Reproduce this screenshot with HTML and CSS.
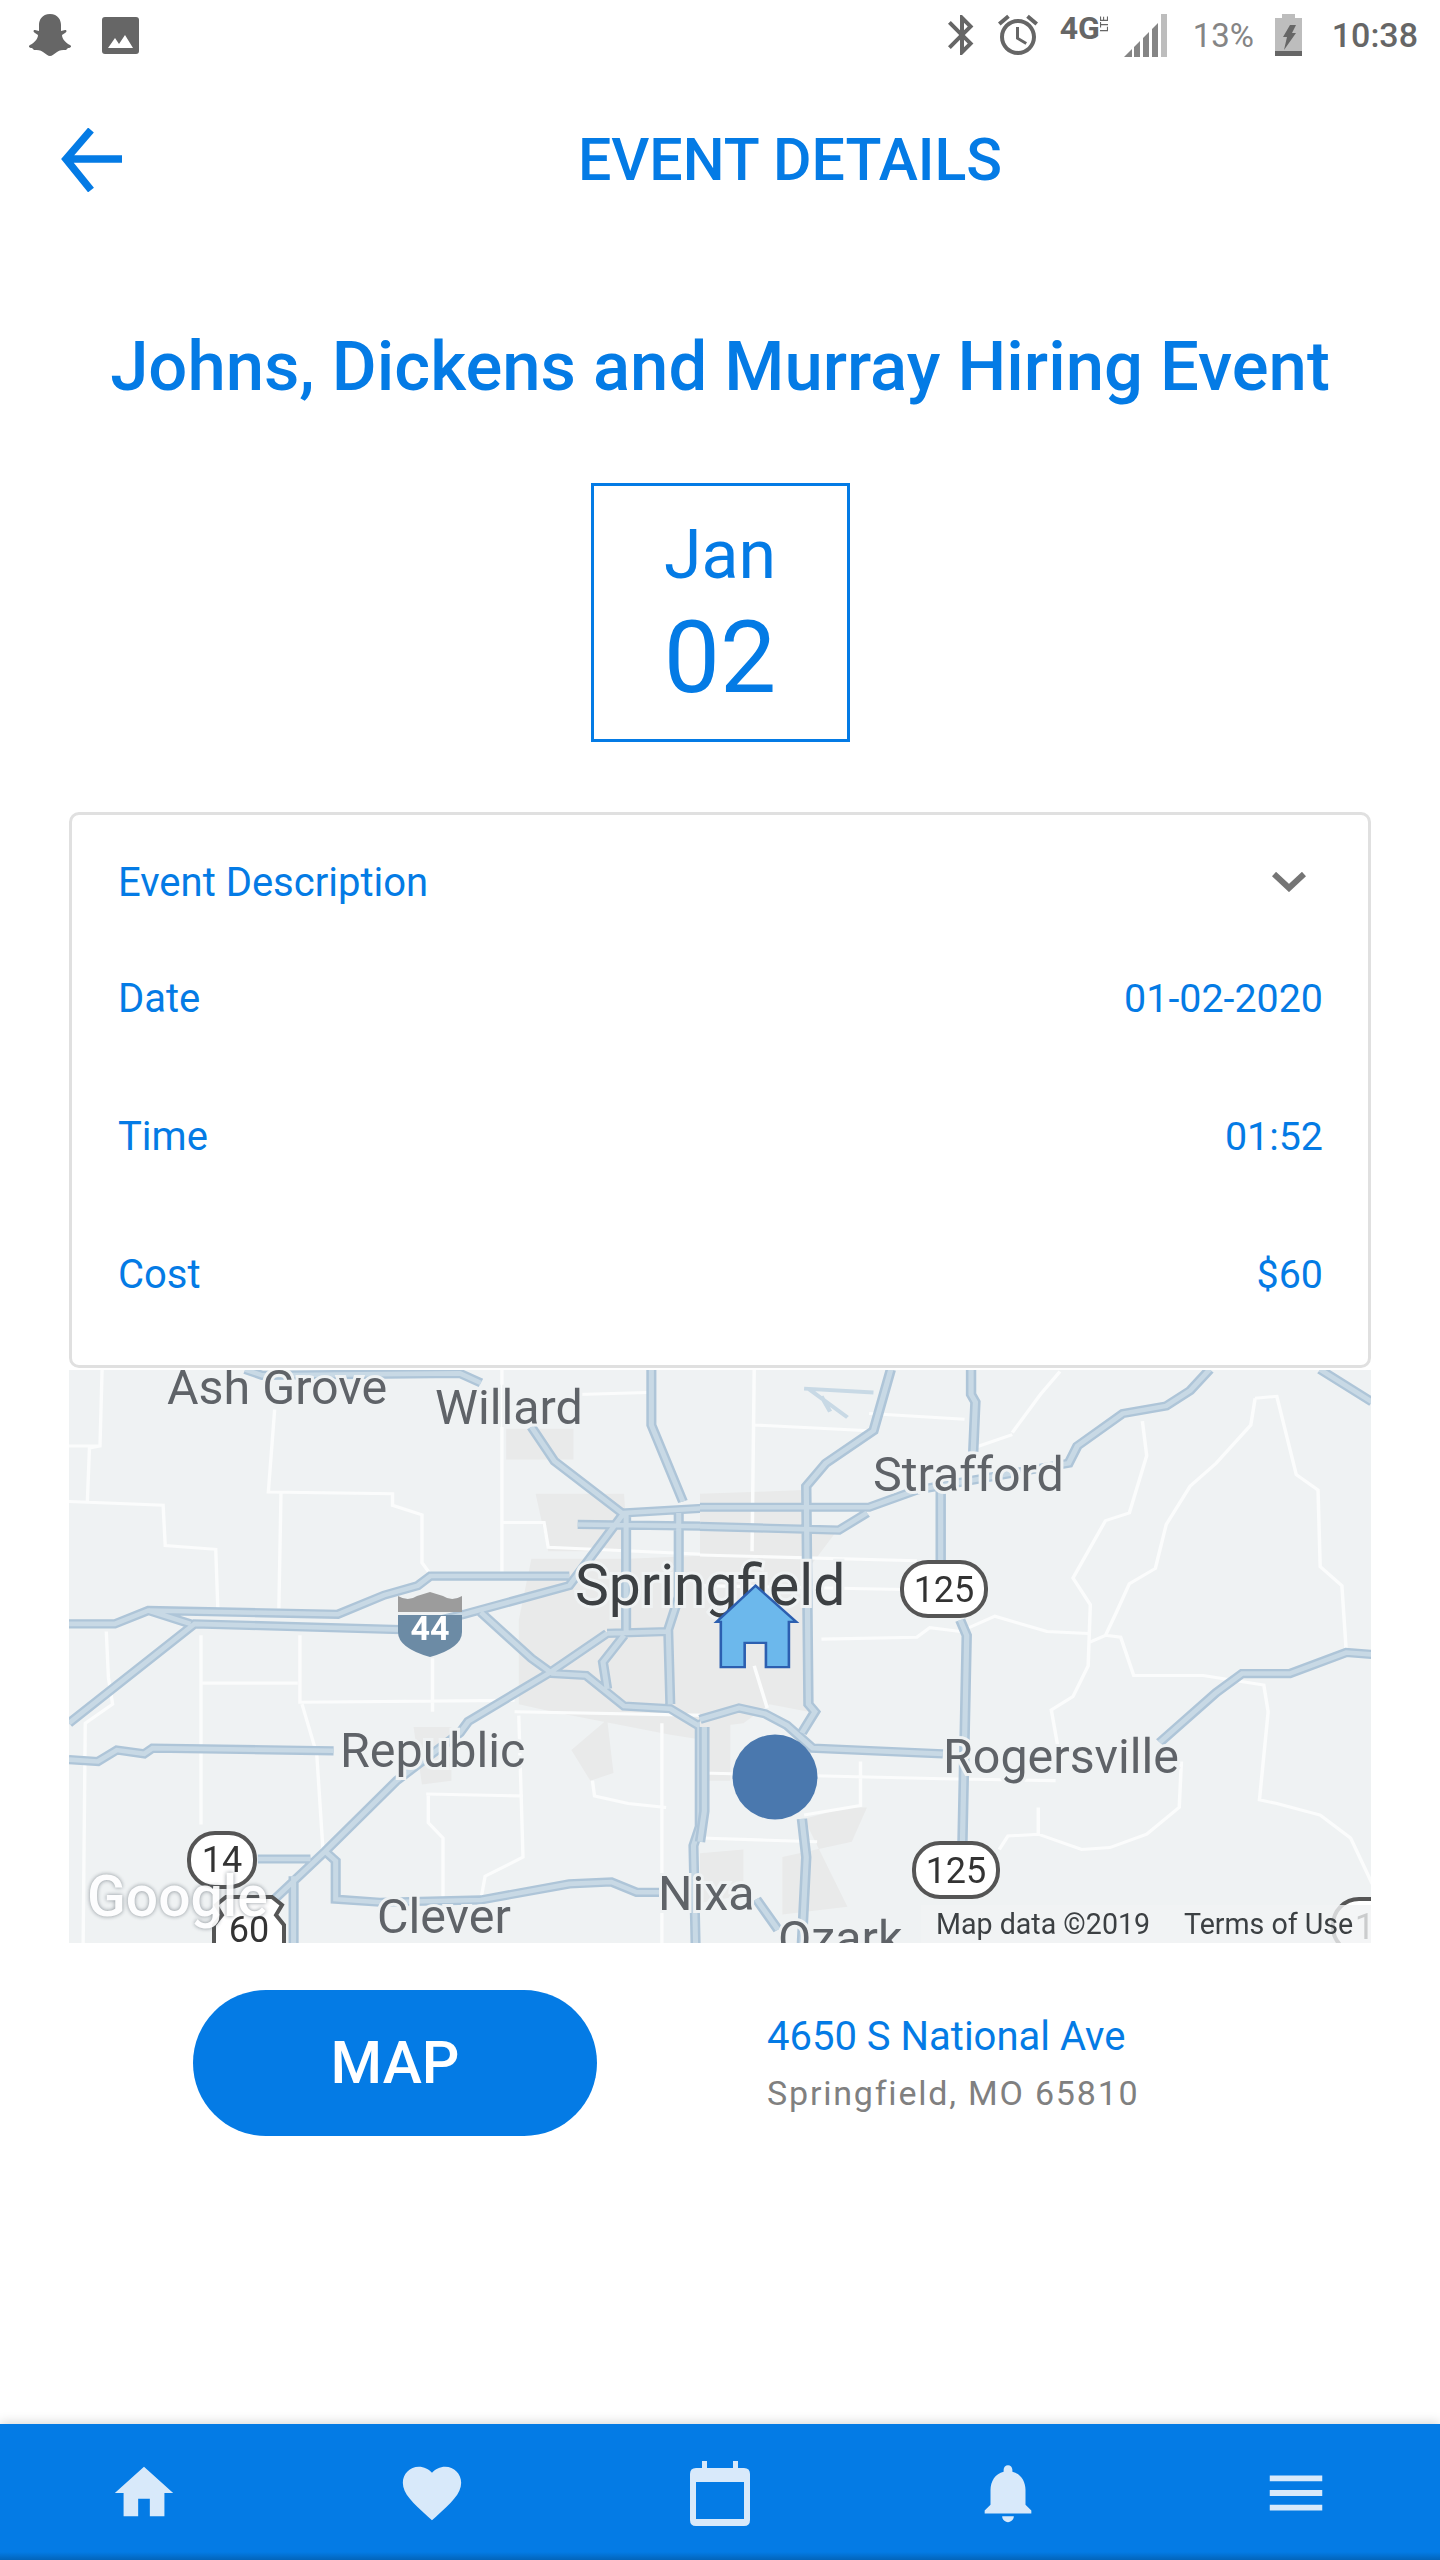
FILE: index.html
```html
<!DOCTYPE html>
<html lang="en">
<head>
    <meta charset="UTF-8">
    <title>Event Details</title>
    <link rel="stylesheet" href="styles.css">
</head>
<body>
<div class="status">
    <svg class="st-snap" viewBox="0 0 45 44"><path d="M22 1C30 1 33 7 33 12L33 18L37 17C39 17 39 19 37 20L34 22C34 26 38 30 42 32C44 33 43 35 40 35L38 37C34 37 32 37 29 39C26 41 24 43 22 43C20 43 18 41 15 39C12 37 10 37 6 37L4 35C1 35 0 33 2 32C6 30 10 26 10 22L7 20C5 19 5 17 7 17L11 18L11 12C11 7 14 1 22 1Z"/></svg>
    <svg class="st-img" viewBox="0 0 37 37"><rect width="37" height="37" rx="3"/><path class="st-white" d="M4 31L11 21L15 27L21 18L29 31Z" transform="translate(2 0)"/></svg>
    <div class="status-right">
        <svg class="st-bt" viewBox="0 0 24 24"><path d="M17.71 7.71L12 2h-1v7.59L6.41 5 5 6.41 10.59 12 5 17.59 6.41 19 11 14.41V22h1l5.71-5.71-4.3-4.29 4.3-4.29zM13 5.83l1.88 1.88L13 9.59V5.83zm1.88 10.46L13 18.17v-3.76l1.88 1.88z"/></svg>
        <svg class="st-alarm" viewBox="0 0 24 24"><path d="M22 5.72l-4.6-3.86-1.29 1.53 4.6 3.86L22 5.72zM7.88 3.39L6.6 1.86 2 5.71l1.29 1.53 4.59-3.85zM12.5 8H11v6l4.75 2.85.75-1.23-4-2.37V8zM12 4c-4.97 0-9 4.03-9 9s4.03 9 9 9 9-4.03 9-9-4.03-9-9-9zm0 16c-3.87 0-7-3.13-7-7s3.13-7 7-7 7 3.13 7 7-3.13 7-7 7z"/></svg>
        <div class="st-net"><span class="st-4g">4G</span><span class="st-lte">LTE</span></div>
        <svg class="st-signal" viewBox="0 0 43 43"><path class="st-light" d="M37 0H43V43H37Z"/><path class="st-mid" d="M0 43L8 35V43ZM10 33L16 27V43H10ZM19 24L25 18V43H19ZM28 15L34 9V43H28Z"/></svg>
        <span class="st-pct">13%</span>
        <svg class="st-batt" viewBox="0 0 27 42"><path class="st-light" d="M7 0H20V4H27V42H0V4H7Z"/><path d="M0 37H27V42H0ZM15 11H21L17 19H21L9 36L12 23H8Z"/></svg>
        <span class="st-time">10:38</span>
    </div>
</div>

<div class="head">
    <div class="back">
        <svg viewBox="0 0 62 64"><path d="M61 31H5M30 2L5 31L30 62"/></svg>
    </div>
    <div class="head-title">EVENT DETAILS</div>
</div>

<h1 class="title">Johns, Dickens and Murray Hiring Event</h1>

<div class="datebox">
    <div class="month">Jan</div>
    <div class="day">02</div>
</div>

<div class="card">
    <div class="card-top">
        <span>Event Description</span>
        <svg class="chev" viewBox="0 0 34 20"><path d="M2 2L17 16L32 2"/></svg>
    </div>
    <div class="row"><span>Date</span><span class="val">01-02-2020</span></div>
    <div class="row"><span>Time</span><span class="val">01:52</span></div>
    <div class="row"><span>Cost</span><span class="val">$60</span></div>
</div>

<div class="map">
    <svg viewBox="69 1370 1302 573">
        <defs>
            <g id="grayA">
                <path d="M1060 180H1220V260H1060ZM1130 350H1340L1350 500H1160ZM1120 520L1350 520L1568 510V1000L1450 980L1170 920L1090 900L1090 680ZM1215 1020L1300 940L1315 1080L1260 1100ZM840 960H930V1100L860 1110Z"/>
            </g>
            <g id="grayB">
                <path d="M0 350L240 340L250 920L160 900L100 950L30 960L0 1000ZM0 950H70V1100H0ZM335 1170H385L350 1260L190 1300L190 1450L340 1430L240 1200ZM0 1290L100 1280V1400L0 1420ZM260 440L320 440L240 560Z"/>
            </g>
            <g id="minorA">
                <path d="M100 25L95 225L70 230L65 370M21 370L245 380L250 485L370 495L375 650M21 225H95M510 130L495 345L790 350L790 380L860 405L860 530L880 560M525 350L520 650M1050 25L1050 560M1230 90L1395 85M1050 425H1150L1160 490L1568 510M570 720V895L1080 890M335 720V1215M335 845H565M885 780V920M1080 920L1568 930M1090 930L1100 1300L1010 1350L1000 1410M870 1135L1100 1140M875 1135V1210L910 1250V1410M110 710L115 830L125 900L60 950L55 1525M575 900L610 1030L625 1285M1265 1100L1270 1140L1350 1160L1440 1170M1430 950V1525"/>
            </g>
            <g id="minorB">
                <path d="M125 25L120 500M125 170L390 185M390 140L610 155M0 510L500 525M720 190L785 90L830 30M630 230L720 195M0 590L470 600M280 730L500 725L530 700L600 710L680 670L800 710L895 715M1020 160L1030 250L990 400L935 420L860 570L900 640L895 800L860 880L810 915L825 1010M1280 100L1330 95L1375 300L1425 340L1430 540L1480 590L1490 760M1280 100L1270 170L1190 270L1130 330L1075 430L1050 545L990 585L960 660L935 720L895 740M935 720L970 725L1000 825H1160L1300 850L1310 920L1290 1150L1330 1160L1430 1190L1500 1250L1550 1370M1110 1050L1105 1170L1030 1240L945 1275L880 1280L780 1240L710 1245L690 1280M780 1170V1240M370 1050V1165L240 1190M0 1250L270 1260M0 1080L560 1095L820 1100M125 800L155 910"/>
            </g>
            <g id="roadsA">
                <path d="M440 25L480 40L950 35L1000 60M21 950L320 690L810 705L960 665L1210 590L1340 400L1568 385M21 690H130L210 655L660 665L770 615L850 590L880 565H1210M210 655L310 690M1000 660L1120 780L1170 820L1250 825L1340 905L1450 912L1515 955L1568 930M1120 175L1175 265L1335 400M1405 25V170L1480 370M1230 430L1568 435M1345 400V710M1470 400V620L1445 705L1450 900M1300 715L1445 710M1300 715L1160 820L970 945L950 975L800 1100L630 1285L500 1420M1340 720L1290 790L1300 860M21 1045L90 1050L135 1020L200 1030L220 1015L650 1022M470 1305H595M630 1285L655 1310V1410L760 1418L1000 1412L1210 1370L1310 1365L1370 1392H1430M555 1350V1525M1520 960V1220L1505 1270L1510 1525"/>
            </g>
            <g id="roadsB">
                <path d="M0 385H390L500 340L850 270L870 225L975 140L1075 120L1130 80L1175 25M0 435L320 445L385 400M440 25L400 185L290 270L245 330L250 900L265 920L235 975M625 25V90L635 110L630 240M555 340V530M1430 25L1550 110M0 940L90 910L150 925L200 955L260 1015L560 1030M10 960V1180L0 1260M600 680L615 720L605 1270M1060 1000L1190 870L1250 820H1360L1490 765L1550 770M235 1200L245 1300L235 1525M130 1410L180 1490"/>
            </g>
        </defs>
        <rect class="map-bg" x="69" y="1370" width="1302" height="573"/>

        <!-- zoom coords -->
        <g transform="translate(60 1360) scale(.4209 .3824)">
            <use class="gray" href="#grayA"/>
            <use class="minor" href="#minorA"/>
            <use class="road-case" href="#roadsA"/>
            <use class="road-fill" href="#roadsA"/>
        </g>
        <g transform="translate(700 1360) scale(.4337 .3824)">
            <use class="gray" href="#grayB"/>
            <use class="minor" href="#minorB"/>
            <path class="water" d="M240 75L400 85M250 75L340 150M280 95L300 135"/>
            <use class="road-case" href="#roadsB"/>
            <use class="road-fill" href="#roadsB"/>
        </g>

        <text class="lbl" x="167" y="1404">Ash Grove</text>
        <text class="lbl" x="435" y="1424">Willard</text>
        <text class="lbl" x="873" y="1491">Strafford</text>
        <text class="lbl lbl-big" x="575" y="1605">Springfield</text>
        <text class="lbl" x="340" y="1767">Republic</text>
        <text class="lbl" x="943" y="1773">Rogersville</text>
        <text class="lbl" x="658" y="1910">Nixa</text>
        <text class="lbl" x="377" y="1933">Clever</text>
        <text class="lbl" x="778" y="1955">Ozark</text>

        <g class="shield-44">
            <path class="s44-top" d="M398 1596Q408 1602 417 1596L430 1592L443 1596Q452 1602 462 1596V1612H398Z"/>
            <path class="s44-bot" d="M398 1615H462V1632Q462 1648 430 1657Q398 1648 398 1632Z"/>
            <text class="s44-txt" x="430" y="1640">44</text>
        </g>
        <rect class="oval" x="189" y="1833" width="66" height="54" rx="26"/>
        <text class="num" x="222" y="1872">14</text>
        <path class="oval" d="M214 1950V1925L222 1915L216 1905L226 1897H272L282 1905L276 1915L284 1925V1950Z"/>
        <text class="num" x="249" y="1942">60</text>
        <rect class="oval" x="902" y="1562" width="84" height="54" rx="26"/>
        <text class="num" x="944" y="1602">125</text>
        <rect class="oval" x="914" y="1843" width="84" height="54" rx="26"/>
        <text class="num" x="956" y="1883">125</text>
        <rect class="oval" x="1333" y="1899" width="84" height="54" rx="26"/>
        <text class="num" x="1375" y="1939">14</text>

        <text class="google" x="87" y="1916">Google</text>
        <rect class="attr-bg" x="921" y="1905" width="450" height="38"/>
        <text class="attr" x="936" y="1934">Map data ©2019</text>
        <text class="attr" x="1184" y="1934">Terms of Use</text>

        <circle class="dot" cx="775" cy="1777" r="42.5"/>
        <path class="pin" transform="translate(700 1360) scale(.4337 .3824)" d="M128 590L222 685H205V803H152V740H103V803H48V685H38Z"/>
    </svg>
</div>

<div class="where">
    <div class="mapbtn">MAP</div>
    <div class="addr">
        <div class="addr1">4650 S National Ave</div>
        <div class="addr2">Springfield, MO 65810</div>
    </div>
</div>

<div class="nav">
    <div class="nav-item"><svg viewBox="0 0 24 24"><path d="M10 20v-6h4v6h5v-8h3L12 3 2 12h3v8z"/></svg></div>
    <div class="nav-item"><svg viewBox="0 0 24 24"><path d="M12 21.35l-1.45-1.32C5.4 15.36 2 12.28 2 8.5 2 5.42 4.42 3 7.5 3c1.74 0 3.41.81 4.5 2.09C13.09 3.81 14.76 3 16.5 3 19.58 3 22 5.42 22 8.5c0 3.78-3.4 6.86-8.55 11.54L12 21.35z"/></svg></div>
    <div class="nav-item"><svg class="nav-cal" viewBox="0 0 60 65"><path fill-rule="evenodd" d="M12 0H17V7H43V0H48V7H54Q60 7 60 13V59Q60 65 54 65H6Q0 65 0 59V13Q0 7 6 7H12ZM6 21V58H54V21Z"/></svg></div>
    <div class="nav-item"><svg viewBox="0 0 24 24"><path d="M12 22c1.1 0 2-.9 2-2h-4c0 1.1.89 2 2 2zm6-6v-5c0-3.07-1.64-5.64-4.5-6.32V4c0-.83-.67-1.5-1.5-1.5s-1.5.67-1.5 1.5v.68C7.63 5.36 6 7.92 6 11v5l-2 2v1h16v-1l-2-2z"/></svg></div>
    <div class="nav-item"><svg viewBox="0 0 24 24"><path d="M3 18h18v-2H3v2zm0-5h18v-2H3v2zm0-7v2h18V6H3z"/></svg></div>
</div>
</body>
</html>
```

FILE: styles.css
```css
*{
    margin: 0px;
    padding: 0px;
    box-sizing: border-box;
}
html,body{
    height: 2560px;
    overflow: hidden;
}
body{
    background: #FFFFFF;
    font-family: Roboto, "Liberation Sans", sans-serif;
    color: #047be5;
    display: flex;
    flex-direction: column;
}

/* status bar */
.status{
    height: 70px;
    display: flex;
    align-items: center;
    padding: 0 22px 0 28px;
    fill: #666666;
    color: #666666;
}
.st-snap{
    width: 45px;
    height: 44px;
}
.st-img{
    width: 37px;
    height: 37px;
    margin-left: 29px;
}
.st-white{
    fill: #FFFFFF;
}
.st-light{
    fill: #bdbdbd;
}
.st-mid{
    fill: #858585;
}
.status-right{
    margin-left: auto;
    display: flex;
    align-items: center;
}
.st-bt,.st-alarm{
    width: 48px;
    height: 48px;
}
.st-alarm{
    margin-left: 8px;
}
.st-net{
    display: flex;
    align-items: flex-start;
    height: 44px;
    width: 41px;
    margin-left: 18px;
}
.st-4g{
    font-size: 32px;
    font-weight: 700;
    line-height: 30px;
}
.st-lte{
    font-size: 10px;
    font-weight: 500;
    line-height: 10px;
    writing-mode: vertical-rl;
    transform: rotate(180deg);
    margin: 3px 0 0 0;
}
.st-signal{
    width: 43px;
    height: 43px;
    margin-left: 23px;
}
.st-pct{
    font-size: 33px;
    color: #858585;
    margin-left: 26px;
    width: 60px;
}
.st-batt{
    width: 27px;
    height: 42px;
    margin-left: 22px;
}
.st-time{
    font-size: 34px;
    font-weight: 500;
    margin-left: 30px;
}

/* header */
.head{
    height: 180px;
    display: flex;
    align-items: center;
    padding-left: 61px;
}
.back{
    width: 79px;
}
.back svg{
    display: block;
    width: 62px;
    height: 64px;
    fill: none;
    stroke: #047be5;
    stroke-width: 7.5;
}
.head-title{
    flex: 1;
    text-align: center;
    font-size: 59px;
    font-weight: 500;
    line-height: 60px;
}

.title{
    font-size: 68.8px;
    font-weight: 500;
    line-height: 84px;
    margin-top: 75px;
    text-align: center;
}

.datebox{
    width: 259px;
    height: 259px;
    border: 3px solid #047be5;
    margin: 74px auto 0;
    text-align: center;
}
.month{
    font-size: 68px;
    line-height: 80px;
    margin-top: 29px;
}
.day{
    font-size: 100px;
    line-height: 110px;
    margin-top: 8px;
}

.card{
    width: 1302px;
    height: 556px;
    margin: 70px auto 0;
    border: 3px solid #e0e0e0;
    border-radius: 10px;
    padding: 20px 45px 0 46px;
    font-size: 40px;
}
.card-top{
    height: 94px;
    display: flex;
    justify-content: space-between;
    align-items: center;
}
.chev{
    width: 34px;
    height: 20px;
    margin-right: 17px;
    fill: none;
    stroke: #757575;
    stroke-width: 6;
}
.row{
    height: 138px;
    display: flex;
    justify-content: space-between;
    align-items: center;
}
.val{
    font-size: 39.4px;
}

.map{
    width: 1302px;
    height: 573px;
    margin: 2px auto 0;
    overflow: hidden;
}
.map svg{
    display: block;
    width: 1302px;
    height: 573px;
    filter: blur(.5px);
}
.map-bg{
    fill: #eff2f3;
}
.gray{
    fill: #e9eaea;
}
.minor{
    fill: none;
    stroke: #fbfcfc;
    stroke-width: 8;
}
.road-case{
    fill: none;
    stroke: #aec5d8;
    stroke-width: 24;
}
.road-fill{
    fill: none;
    stroke: #c8d9e5;
    stroke-width: 12;
}
.water{
    fill: none;
    stroke: #c8d9e5;
    stroke-width: 10;
}
.lbl{
    font-size: 48.4px;
    fill: #5f6368;
    stroke: #eff2f3;
    stroke-width: 6px;
    paint-order: stroke;
}
.lbl-big{
    font-size: 57px;
    fill: #3c4043;
}
.s44-top{
    fill: #9c9c9c;
}
.s44-bot{
    fill: #6c8ba5;
}
.s44-txt{
    font-size: 34px;
    font-weight: 700;
    fill: #FFFFFF;
    text-anchor: middle;
}
.oval{
    fill: #FFFFFF;
    stroke: #555555;
    stroke-width: 4;
}
.num{
    font-size: 36px;
    fill: #333333;
    text-anchor: middle;
}
.google{
    font-size: 57px;
    font-weight: 500;
    fill: #FFFFFF;
    opacity: .92;
    filter: drop-shadow(0 0 2px rgba(80,90,100,.7));
}
.attr-bg{
    fill: #f1f3f4;
    opacity: .8;
}
.attr{
    font-size: 28.6px;
    fill: #3c4043;
}
.dot{
    fill: #4a78ae;
}
.pin{
    fill: #6cb8ec;
    stroke: #2c5fb0;
    stroke-width: 6;
}

.where{
    display: flex;
    align-items: center;
    margin-top: 47px;
    padding-left: 193px;
}
.mapbtn{
    width: 404px;
    height: 146px;
    border-radius: 73px;
    background: #047be5;
    color: #FFFFFF;
    font-size: 59px;
    font-weight: 500;
    line-height: 146px;
    text-align: center;
}
.addr{
    margin-left: 170px;
    padding-top: 4px;
}
.addr1{
    font-size: 40px;
    line-height: 56px;
}
.addr2{
    font-size: 34px;
    line-height: 56px;
    letter-spacing: 1.8px;
    color: #808080;
}

/* bottom nav */
.nav{
    margin-top: auto;
    height: 136px;
    display: grid;
    grid-template-columns: repeat(5,1fr);
    background: linear-gradient(#047be5 128px,#0364b9 136px);
    box-shadow: 0 -2px 10px rgba(0,0,0,.15);
    fill: #d8e9fa;
}
.nav-item{
    display: flex;
    justify-content: center;
    padding-top: 34px;
}
.nav-item svg{
    width: 70px;
    height: 70px;
}
.nav-item .nav-cal{
    width: 60px;
    height: 65px;
    margin-top: 3px;
}
```
